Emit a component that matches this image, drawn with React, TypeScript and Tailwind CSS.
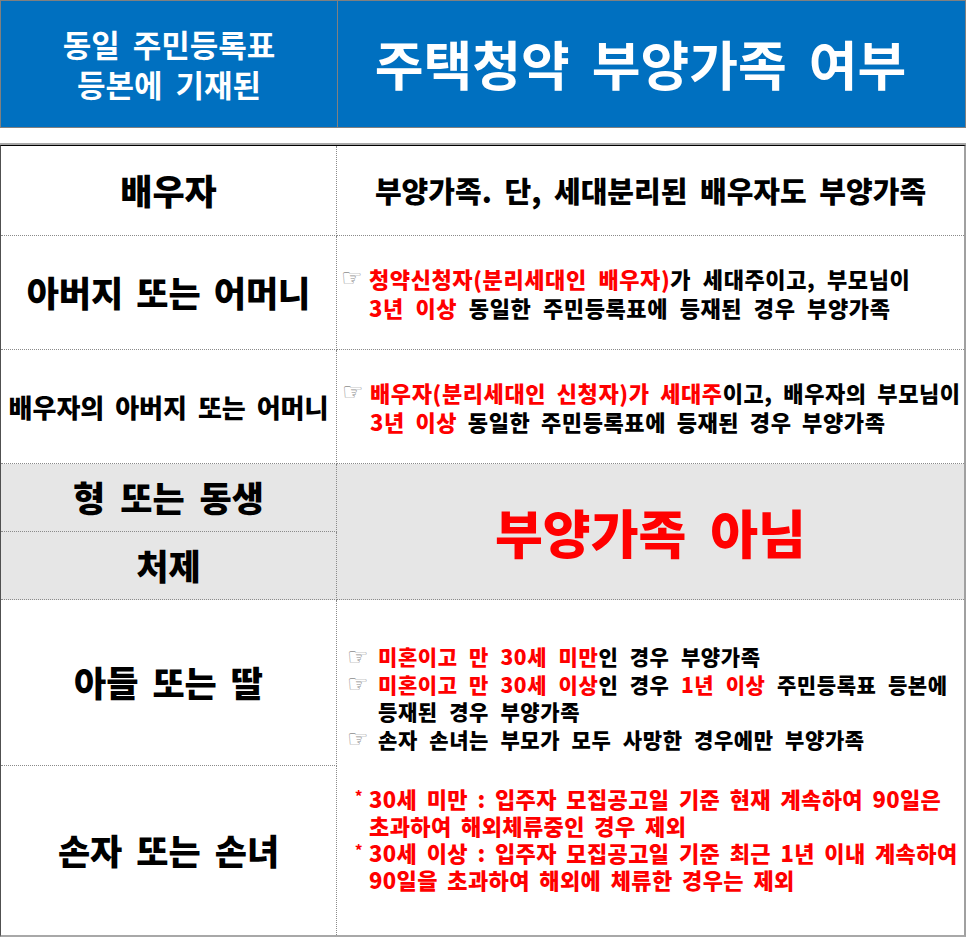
import type { ReactNode } from 'react';

const KR = "font-['Noto_Sans_CJK_KR','Noto_Sans',sans-serif]";

function Red({ children }: { children: ReactNode }) {
  return <span className="text-[#ff0000]">{children}</span>;
}

function Hand() {
  return (
    <span className="font-['DejaVu_Sans',sans-serif] text-[24px] font-normal leading-none tracking-normal text-[#8c8c8c]">
      ☞
    </span>
  );
}

function Bullet({ children, indent = 'w-[28px]', h = 'h-[29px]' }: { children: ReactNode; indent?: string; h?: string }) {
  return (
    <div className="flex items-start">
      <div className={`${indent} ${h} flex shrink-0 items-center`}>
        <Hand />
      </div>
      <div>{children}</div>
    </div>
  );
}

function Note({ children }: { children: ReactNode }) {
  return (
    <div className="flex items-start">
      <div className="w-[14px] shrink-0 pt-[3px] text-[14px] leading-none">*</div>
      <div>{children}</div>
    </div>
  );
}

const leftCell =
  'flex items-center justify-center border-r border-b border-dotted border-[#8a8a8a] font-black text-black';
const rightCell = 'flex items-center border-b border-dotted border-[#8a8a8a] font-black text-black';

export default function App() {
  return (
    <div className={`${KR} h-[938px] w-[966px] bg-white`}>
      {/* Header */}
      <div className="grid h-[128px] grid-cols-[337px_1fr] border border-[#808080] bg-[#0070c0] text-white">
        <div className="flex flex-col items-center justify-center border-r border-[#808080] text-[31px] font-bold leading-[40px] [word-spacing:6px]">
          <div>동일 주민등록표</div>
          <div>등본에 기재된</div>
        </div>
        <div className="flex items-center justify-center pr-[22px] text-[53px] font-bold [word-spacing:10px]">
          주택청약 부양가족 여부
        </div>
      </div>

      {/* Table */}
      <div className="mt-[15px] border-t-2 border-[#a8a8a8]">
        <div className="grid grid-cols-[336px_1fr] grid-rows-[90px_114px_114px_68px_68px_166px_169px] border-t border-r-2 border-b-2 border-l border-t-black border-r-[#a0a0a0] border-b-[#a8a8a8] border-l-[#505050]">
          <div className={`${leftCell} text-[35px]`}>배우자</div>
          <div className={`${rightCell} justify-center text-[29px] [word-spacing:6px]`}>
            부양가족. 단, 세대분리된 배우자도 부양가족
          </div>

          <div className={`${leftCell} text-[35px] [word-spacing:5px]`}>아버지 또는 어머니</div>
          <div className={`${rightCell} pl-[4px] text-[22px] leading-[29px] tracking-[0.6px] [word-spacing:6px]`}>
            <Bullet>
              <div>
                <Red>청약신청자(분리세대인 배우자)</Red>가 세대주이고, 부모님이
              </div>
              <div>
                <Red>3년 이상</Red> 동일한 주민등록표에 등재된 경우 부양가족
              </div>
            </Bullet>
          </div>

          <div className={`${leftCell} text-[26px] [word-spacing:5px]`}>배우자의 아버지 또는 어머니</div>
          <div className={`${rightCell} pl-[5px] text-[22px] leading-[29px] tracking-[0.6px] [word-spacing:5px]`}>
            <Bullet>
              <div>
                <Red>배우자(분리세대인 신청자)가 세대주</Red>이고, 배우자의 부모님이
              </div>
              <div>
                <Red>3년 이상</Red> 동일한 주민등록표에 등재된 경우 부양가족
              </div>
            </Bullet>
          </div>

          <div className={`${leftCell} bg-[#e6e6e6] text-[35px] [word-spacing:7px]`}>형 또는 동생</div>
          <div className="row-span-2 flex items-center justify-center border-b border-dotted border-[#8a8a8a] bg-[#e6e6e6] text-[52px] font-black text-[#ff0000] [word-spacing:12px]">
            부양가족 아님
          </div>
          <div className={`${leftCell} bg-[#e6e6e6] text-[35px]`}>처제</div>

          <div className={`${leftCell} text-[35px] [word-spacing:6px]`}>아들 또는 딸</div>
          <div className="row-span-2 flex flex-col pt-[43px] pl-[10px] font-black text-black">
            <div className="text-[21px] leading-[27.5px] tracking-[0.6px] [word-spacing:6px]">
              <Bullet indent="w-[31px]" h="h-[27.5px]">
                <div>
                  <Red>미혼이고 만 30세 미만</Red>인 경우 부양가족
                </div>
              </Bullet>
              <Bullet indent="w-[31px]" h="h-[27.5px]">
                <div>
                  <Red>미혼이고 만 30세 이상</Red>인 경우 <Red>1년 이상</Red> 주민등록표 등본에
                </div>
                <div>등재된 경우 부양가족</div>
              </Bullet>
              <Bullet indent="w-[31px]" h="h-[27.5px]">
                <div>손자 손녀는 부모가 모두 사망한 경우에만 부양가족</div>
              </Bullet>
            </div>
            <div className="mt-[32px] pl-[8px] text-[22px] leading-[27px] tracking-[0.4px] text-[#ff0000] [word-spacing:4px]">
              <Note>
                <div>30세 미만 : 입주자 모집공고일 기준 현재 계속하여 90일은</div>
                <div>초과하여 해외체류중인 경우 제외</div>
              </Note>
              <Note>
                <div>30세 이상 : 입주자 모집공고일 기준 최근 1년 이내 계속하여</div>
                <div>90일을 초과하여 해외에 체류한 경우는 제외</div>
              </Note>
            </div>
          </div>
          <div className="flex items-center justify-center border-r border-dotted border-[#8a8a8a] text-[35px] font-black text-black [word-spacing:6px]">
            손자 또는 손녀
          </div>
        </div>
      </div>
    </div>
  );
}
